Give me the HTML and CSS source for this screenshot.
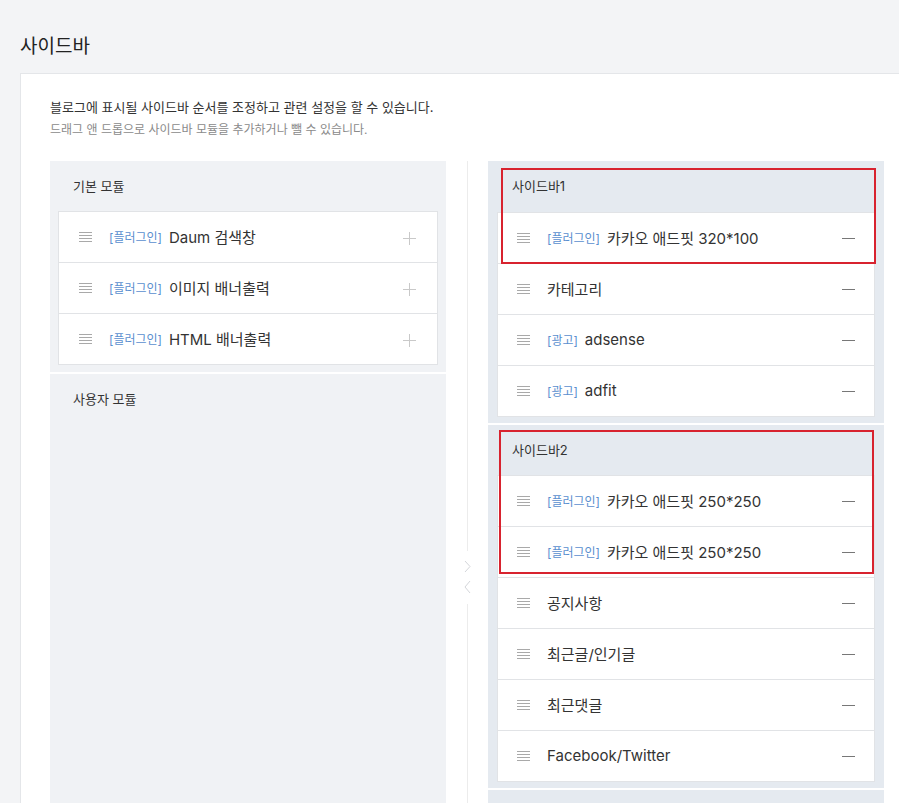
FILE: index.html
```html
<!DOCTYPE html>
<html lang="ko">
<head>
    <meta charset="UTF-8">
    <meta name="viewport" content="width=device-width, initial-scale=1.0">
    <title>사이드바</title>
    <link rel="stylesheet" href="styles.css">
</head>
<body>

<div class="page-head">
    <h2>사이드바</h2>
</div>

<div class="panel">
    <p class="desc">블로그에 표시될 사이드바 순서를 조정하고 관련 설정을 할 수 있습니다.</p>
    <p class="desc-sub">드래그 앤 드롭으로 사이드바 모듈을 추가하거나 뺄 수 있습니다.</p>

    <div class="columns">
        <!-- 모듈 목록 -->
        <div class="col">
            <div class="group">
                <div class="group-title">기본 모듈</div>
                <ul class="mod-list">
                    <li class="mod"><span class="drag"></span><span class="tag">[플러그인]</span><span class="name">Daum 검색창</span><span class="add"></span></li>
                    <li class="mod"><span class="drag"></span><span class="tag">[플러그인]</span><span class="name">이미지 배너출력</span><span class="add"></span></li>
                    <li class="mod"><span class="drag"></span><span class="tag">[플러그인]</span><span class="name">HTML 배너출력</span><span class="add"></span></li>
                </ul>
            </div>
            <div class="group group-tall">
                <div class="group-title">사용자 모듈</div>
            </div>
        </div>

        <div class="divider">
            <div class="line line-top"></div>
            <svg class="arrows" width="10" height="36" viewBox="0 0 10 36">
                <path d="M3 1 L8 6.5 L3 12" fill="none" stroke="#d4d6da" stroke-width="1"/>
                <path d="M8 21 L3 27 L8 33" fill="none" stroke="#d4d6da" stroke-width="1"/>
            </svg>
            <div class="line"></div>
        </div>

        <!-- 사이드바 -->
        <div class="col col-side">
            <div class="group side">
                <div class="group-title side-title">사이드바1</div>
                <ul class="mod-list">
                    <li class="mod side-mod"><span class="drag"></span><span class="tag">[플러그인]</span><span class="name">카카오 애드핏 320*100</span><span class="remove"></span></li>
                    <li class="mod side-mod"><span class="drag"></span><span class="name">카테고리</span><span class="remove"></span></li>
                    <li class="mod side-mod"><span class="drag"></span><span class="tag">[광고]</span><span class="name">adsense</span><span class="remove"></span></li>
                    <li class="mod side-mod"><span class="drag"></span><span class="tag">[광고]</span><span class="name">adfit</span><span class="remove"></span></li>
                </ul>
            </div>
            <div class="group side">
                <div class="group-title side-title">사이드바2</div>
                <ul class="mod-list">
                    <li class="mod side-mod"><span class="drag"></span><span class="tag">[플러그인]</span><span class="name">카카오 애드핏 250*250</span><span class="remove"></span></li>
                    <li class="mod side-mod"><span class="drag"></span><span class="tag">[플러그인]</span><span class="name">카카오 애드핏 250*250</span><span class="remove"></span></li>
                    <li class="mod side-mod"><span class="drag"></span><span class="name">공지사항</span><span class="remove"></span></li>
                    <li class="mod side-mod"><span class="drag"></span><span class="name">최근글/인기글</span><span class="remove"></span></li>
                    <li class="mod side-mod"><span class="drag"></span><span class="name">최근댓글</span><span class="remove"></span></li>
                    <li class="mod side-mod"><span class="drag"></span><span class="name">Facebook/Twitter</span><span class="remove"></span></li>
                </ul>
            </div>
            <div class="group side side-next"></div>

            <div class="mark mark-one"></div>
            <div class="mark mark-two"></div>
        </div>
    </div>
</div>

</body>
</html>
```

FILE: styles.css
```css
body {
    margin: 0;
    background-color: #f3f4f6;
    font-family: Inter, "Noto Sans CJK KR", sans-serif;
    color: #333;
    overflow: hidden;
}
.page-head {
    padding: 34px 20px 0;
}
.page-head h2 {
    margin: 0 0 13px;
    font-size: 19px;
    line-height: 26px;
    font-weight: normal;
    color: #222;
}
.panel {
    margin-left: 20px;
    width: 865px;
    padding: 23px 30px 0 29px;
    background-color: #fff;
    border: 1px solid #e4e6e9;
    border-right: none;
    height: 760px;
}
.desc {
    margin: 0;
    font-size: 13px;
    line-height: 20px;
    color: #333;
}
.desc-sub {
    margin: 4px 0 0;
    font-size: 12px;
    line-height: 18px;
    color: #8a8a8a;
}
.columns {
    display: flex;
    margin-top: 22px;
}
.col {
    width: 396px;
    flex-shrink: 0;
}
.col-side {
    position: relative;
}
.group {
    background-color: #f0f2f5;
    padding: 0 8px 7px;
}
.group + .group {
    margin-top: 2px;
}
.group-tall {
    height: 500px;
}
.group-title {
    height: 50px;
    line-height: 50px;
    padding-left: 15px;
    font-size: 13px;
    color: #333;
}
.mod-list {
    list-style: none;
    margin: 0;
    padding: 0;
    background-color: #fff;
    border: 1px solid #e1e3e6;
}
.mod {
    display: flex;
    align-items: center;
    height: 48px;
    padding: 0 21px 2px 20px;
    border-top: 1px solid #e1e3e6;
}
.mod:first-child {
    border-top: none;
}
.drag {
    width: 13px;
    height: 10px;
    margin: 2px 17px 0 0;
    background: repeating-linear-gradient(to bottom, #a9a9a9 0, #a9a9a9 1px, transparent 1px, transparent 3px);
}
.tag {
    font-size: 12px;
    color: #5a8fcf;
    margin-right: 7px;
}
.name {
    flex: 1;
    font-size: 15px;
    color: #333;
}
.add {
    position: relative;
    width: 13px;
    height: 13px;
    margin-top: 4px;
}
.add::before,
.add::after {
    content: "";
    position: absolute;
    background-color: #c9c9c9;
}
.add::before {
    left: 0;
    top: 6px;
    width: 13px;
    height: 1px;
}
.add::after {
    left: 6px;
    top: 0;
    width: 1px;
    height: 13px;
}
.remove {
    width: 13px;
    height: 1px;
    margin-top: 2px;
    background-color: #777;
}
.divider {
    width: 42px;
    flex-shrink: 0;
    display: flex;
    flex-direction: column;
    align-items: center;
}
.line {
    width: 1px;
    flex: 1;
    background-color: #ececec;
}
.line-top {
    flex: none;
    height: 390px;
}
.arrows {
    margin: 9px 0 8px;
}
.side {
    background-color: #e5eaf0;
    padding: 0 9px 6px;
}
.side-title {
    height: 51px;
    line-height: 51px;
}
.side-mod {
    padding: 0 19px 2px 19px;
}
.side + .side .side-title {
    height: 50px;
    line-height: 50px;
}
.side-next {
    height: 40px;
}
.mark {
    position: absolute;
    border: 2px solid #d8232f;
    box-sizing: border-box;
}
.mark-one {
    left: 13px;
    top: 7px;
    width: 375px;
    height: 96px;
}
.mark-two {
    left: 11px;
    top: 269px;
    width: 375px;
    height: 144px;
}
```
